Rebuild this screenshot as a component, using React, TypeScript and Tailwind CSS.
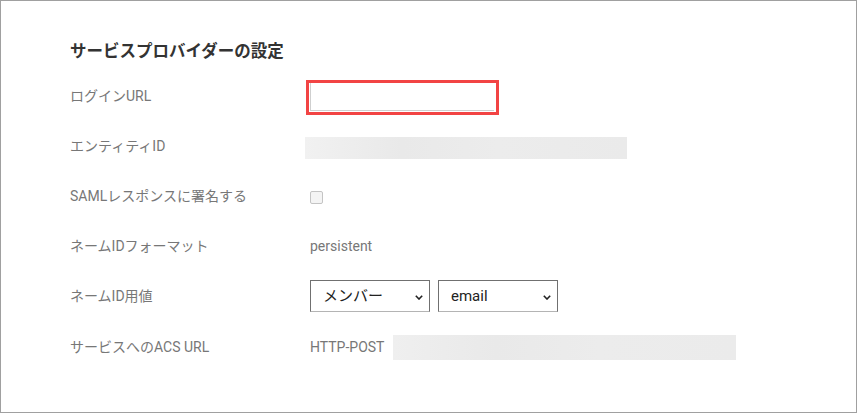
import React from "react";

const labelCls = "w-[240px] shrink-0 text-[14px] text-[#777777]";
const font = { fontFamily: "Roboto, 'Noto Sans CJK JP', sans-serif" };

function Chevron() {
  return (
    <svg width="8" height="5" viewBox="0 0 8 5" className="absolute right-[6px] top-[14px]">
      <path d="M0.8 0.8 L4 4 L7.2 0.8" fill="none" stroke="#222" strokeWidth="1.6" />
    </svg>
  );
}

function FakeSelect({ text }: { text: string }) {
  return (
    <div className="relative w-[120px] h-[32px] border border-[#707070] border-b-[#b4b4b4] bg-white flex items-center pl-[12px] text-[15px] text-[#222]">
      {text}
      <Chevron />
    </div>
  );
}

function Row({ label, children, className = "" }: { label: string; children?: React.ReactNode; className?: string }) {
  return (
    <div className={"flex items-center h-[50px] " + className}>
      <div className={labelCls}>{label}</div>
      <div className="flex items-center">{children}</div>
    </div>
  );
}

export default function App() {
  return (
    <div className="w-[857px] h-[413px] border border-[#a0a0a0] bg-white pl-[69px] pt-[39px]" style={font}>
      <div className="text-[16.5px] font-bold text-[#333333] leading-[24px] mb-[7px]">サービスプロバイダーの設定</div>
      <Row label="ログインURL">
        <div className="w-[193px] h-[35px] border-[3px] border-[#f24444] -ml-[4px] mt-[2px] pl-[1px] pb-[1px] pr-[2px]">
          <div className="h-full w-full border-l border-b border-[#cfcfcf]" />
        </div>
      </Row>
      <Row label="エンティティID">
        <div className="-ml-[5px] mt-[4px] w-[322px] h-[22px] bg-[linear-gradient(90deg,#f1f1f1,#e9e9e9_30%,#ececec_60%,#eaeaea)]" />
      </Row>
      <Row label="SAMLレスポンスに署名する">
        <div className="mt-[3px] w-[13px] h-[13px] rounded-[2px] border border-[#c4c4c4] bg-[#f4f4f4]" />
      </Row>
      <Row label="ネームIDフォーマット">
        <span className="text-[14px] text-[#777777]">persistent</span>
      </Row>
      <Row label="ネームID用値">
        <div className="flex gap-[8px]">
          <FakeSelect text="メンバー" />
          <FakeSelect text="email" />
        </div>
      </Row>
      <Row label="サービスへのACS URL" className="mt-[1px]">
        <span className="text-[14px] text-[#777777]">HTTP-POST</span>
        <div className="ml-[9px] w-[343px] h-[25px] bg-[linear-gradient(90deg,#efefef,#e9e9e9_30%,#ececec_60%,#ebebeb)]" />
      </Row>
    </div>
  );
}
